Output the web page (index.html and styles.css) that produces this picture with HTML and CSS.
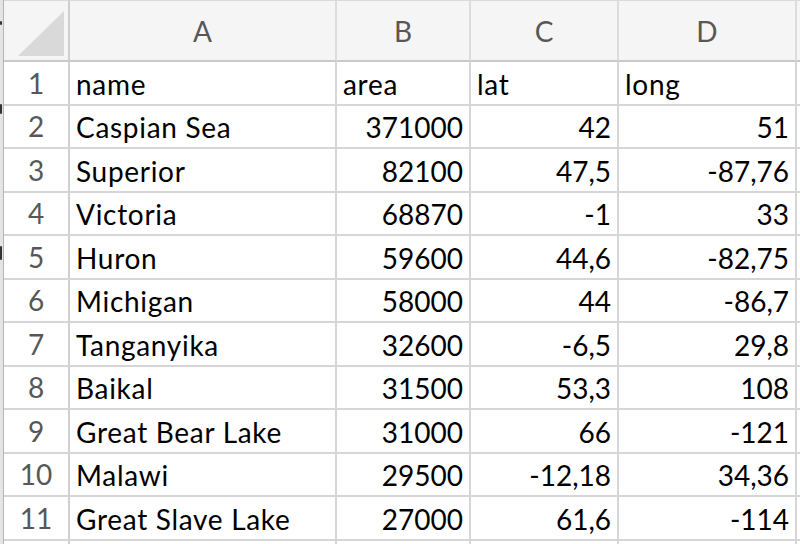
FILE: index.html
```html
<!DOCTYPE html>
<html>
<head>
<meta charset="utf-8">
<link rel="stylesheet" href="styles.css">
</head>
<body>
<div class="page">
  <div class="edge">
    <span class="mark m1"></span>
    <span class="mark m2"></span>
    <span class="mark m3"></span>
  </div>
  <div class="sheet">
    <div class="corner"><svg width="64" height="60" viewBox="0 0 64 60"><polygon points="14,55 60,10 60,55" fill="#d9d9d9"/></svg></div>
    <div class="colhdr">A</div>
    <div class="colhdr">B</div>
    <div class="colhdr">C</div>
    <div class="colhdr">D</div>
    <div class="colhdr extra"></div>

    <div class="rowhdr">1</div><div class="cell">name</div><div class="cell">area</div><div class="cell">lat</div><div class="cell">long</div><div class="cell extra"></div>
    <div class="rowhdr">2</div><div class="cell">Caspian Sea</div><div class="cell num">371000</div><div class="cell num">42</div><div class="cell num">51</div><div class="cell extra"></div>
    <div class="rowhdr">3</div><div class="cell">Superior</div><div class="cell num">82100</div><div class="cell num">47,5</div><div class="cell num">-87,76</div><div class="cell extra"></div>
    <div class="rowhdr">4</div><div class="cell">Victoria</div><div class="cell num">68870</div><div class="cell num">-1</div><div class="cell num">33</div><div class="cell extra"></div>
    <div class="rowhdr">5</div><div class="cell">Huron</div><div class="cell num">59600</div><div class="cell num">44,6</div><div class="cell num">-82,75</div><div class="cell extra"></div>
    <div class="rowhdr">6</div><div class="cell">Michigan</div><div class="cell num">58000</div><div class="cell num">44</div><div class="cell num">-86,7</div><div class="cell extra"></div>
    <div class="rowhdr">7</div><div class="cell">Tanganyika</div><div class="cell num">32600</div><div class="cell num">-6,5</div><div class="cell num">29,8</div><div class="cell extra"></div>
    <div class="rowhdr">8</div><div class="cell">Baikal</div><div class="cell num">31500</div><div class="cell num">53,3</div><div class="cell num">108</div><div class="cell extra"></div>
    <div class="rowhdr">9</div><div class="cell">Great Bear Lake</div><div class="cell num">31000</div><div class="cell num">66</div><div class="cell num">-121</div><div class="cell extra"></div>
    <div class="rowhdr">10</div><div class="cell">Malawi</div><div class="cell num">29500</div><div class="cell num">-12,18</div><div class="cell num">34,36</div><div class="cell extra"></div>
    <div class="rowhdr">11</div><div class="cell">Great Slave Lake</div><div class="cell num">27000</div><div class="cell num">61,6</div><div class="cell num">-114</div><div class="cell extra"></div>
    <div class="rowhdr"></div><div class="cell"></div><div class="cell"></div><div class="cell"></div><div class="cell"></div><div class="cell extra"></div>
  </div>
</div>
</body>
</html>
```

FILE: styles.css
```css
html, body {
  margin: 0;
  padding: 0;
  background: #ffffff;
  overflow: hidden;
}
.page {
  display: flex;
  width: 800px;
  height: 544px;
  overflow: hidden;
}
.edge {
  position: relative;
  width: 3px;
  flex: none;
  background: #e4e4e4;
  border-right: 1px solid #b4b4b4;
}
.mark {
  position: absolute;
  left: 0;
  width: 2px;
  background: #333;
  border-radius: 1px;
}
.m1 { top: 21px; height: 4px; }
.m2 { top: 104px; height: 10px; }
.m3 { top: 246px; height: 14px; }
.sheet {
  display: grid;
  grid-template-columns: 66px 267px 134px 148px 178px 10px;
  grid-template-rows: 62px repeat(12, 43.5px);
  font-family: "Lato", "Liberation Sans", sans-serif;
}
.sheet > div {
  box-sizing: border-box;
  border-right: 2px solid #d6d6d6;
  border-bottom: 2px solid #d6d6d6;
}
.corner {
  background: #f5f5f5;
  border-right-color: #cfcfcf !important;
  border-bottom-color: #c9c9c9 !important;
  border-top: 1px solid #dadada;
}
.corner svg { display: block; }
.colhdr {
  background: #f5f5f5;
  border-top: 1px solid #dadada;
  border-right-color: #dcdcdc !important;
  border-bottom-color: #c9c9c9 !important;
  display: flex;
  align-items: center;
  justify-content: center;
  color: #575757;
  font-size: 28px;
  padding-top: 1px;
}
.rowhdr {
  background: #ffffff;
  border-right-color: #cfcfcf !important;
  display: flex;
  align-items: center;
  justify-content: center;
  color: #575757;
  font-size: 28px;
}
.cell {
  display: flex;
  align-items: center;
  padding: 2px 6px 0 6px;
  color: #000000;
  font-size: 28px;
  letter-spacing: 0.7px;
  white-space: nowrap;
  overflow: hidden;
}
.num {
  justify-content: flex-end;
  letter-spacing: 0;
}
.extra {
  border-right: none !important;
}
```
